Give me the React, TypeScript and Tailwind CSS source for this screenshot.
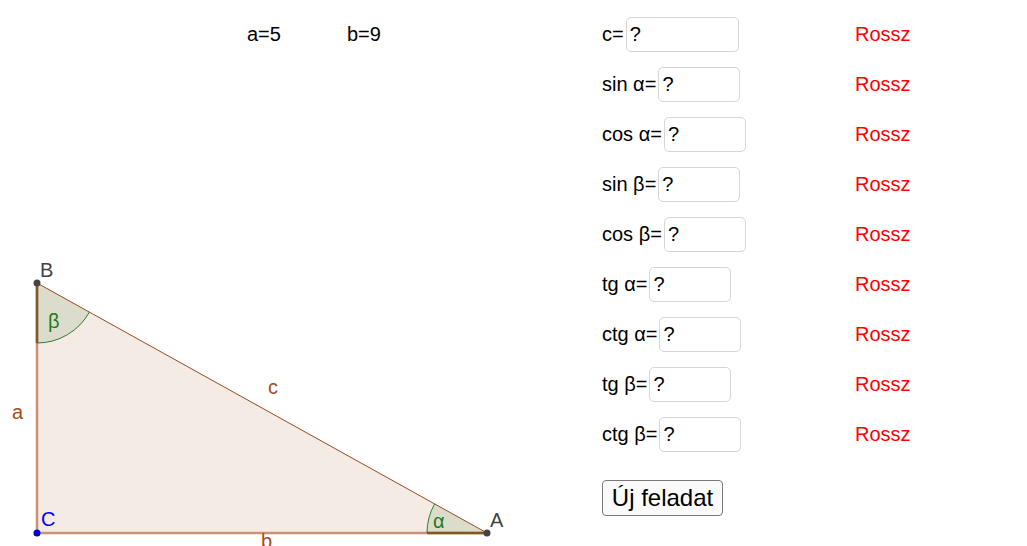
import React from 'react'

const rows = [
  { label: 'c=', w: 'w-[113px]' },
  { label: 'sin α=', w: 'w-[82px]' },
  { label: 'cos α=', w: 'w-[82px]' },
  { label: 'sin β=', w: 'w-[82px]' },
  { label: 'cos β=', w: 'w-[82px]' },
  { label: 'tg α=', w: 'w-[82px]' },
  { label: 'ctg α=', w: 'w-[82px]' },
  { label: 'tg β=', w: 'w-[82px]' },
  { label: 'ctg β=', w: 'w-[82px]' },
]

// right triangle, 50px per unit: C(37,283) B(37,33) A(487,283)
function Triangle() {
  return (
    <svg width="540" height="296" viewBox="0 0 540 296" className="block">
      <polygon points="37,283 37,33 487,283" fill="#f4ebe5" />
      {/* beta sector */}
      <path d="M37,33 L37,93 A60,60 0 0 0 89.4,62.1 Z" fill="#dcdccd" />
      {/* alpha sector */}
      <path d="M487,283 L427,283 A60,60 0 0 1 434.6,253.9 Z" fill="#dcdccd" />
      {/* sides a, b */}
      <line x1="37" y1="33" x2="37" y2="283" stroke="#c99377" strokeWidth="2.5" />
      <line x1="37" y1="283" x2="487" y2="283" stroke="#c99377" strokeWidth="2.5" />
      {/* angle radii overlay */}
      <line x1="37" y1="33" x2="37" y2="93" stroke="#7d5a22" strokeWidth="2.5" />
      <line x1="427" y1="283" x2="487" y2="283" stroke="#7d5a22" strokeWidth="2.5" />
      {/* side c */}
      <line x1="37" y1="33" x2="487" y2="283" stroke="#9c4a1e" strokeWidth="1" />
      <path d="M37,93 A60,60 0 0 0 89.4,62.1" fill="none" stroke="#2e7d32" strokeWidth="1" />
      <path d="M427,283 A60,60 0 0 1 434.6,253.9" fill="none" stroke="#2e7d32" strokeWidth="1" />
      {/* points */}
      <circle cx="37" cy="33" r="3.5" fill="#444" />
      <circle cx="487" cy="283" r="3.5" fill="#444" />
      <circle cx="37" cy="283" r="3.5" fill="#0000cc" />
      {/* labels */}
      <text x="40" y="27" fontSize="20" fill="#444">B</text>
      <text x="490" y="277" fontSize="20" fill="#444">A</text>
      <text x="41" y="276" fontSize="20" fill="#0000ff">C</text>
      <text x="48" y="78" fontSize="20" fill="#1e7b1e">β</text>
      <text x="433" y="278" fontSize="20" fill="#1e7b1e">α</text>
      <text x="12" y="169" fontSize="20" fill="#a34d1f">a</text>
      <text x="268" y="144" fontSize="20" fill="#a34d1f">c</text>
      <text x="261" y="298" fontSize="20" fill="#a34d1f">b</text>
    </svg>
  )
}

export default function App() {
  return (
    <div className="w-[1027px] h-[546px] overflow-hidden bg-white flex font-['Liberation_Sans',Arial,sans-serif] text-[20px] text-black">
      <div className="w-[602px] flex flex-col">
        <div className="h-[250px] pt-[9px]">
          <div className="flex h-[50px] items-center">
            <span className="ml-[247px] w-[100px]">a=5</span>
            <span>b=9</span>
          </div>
        </div>
        <Triangle />
      </div>
      <div className="flex flex-col pt-[9px]">
        {rows.map((r) => (
          <div key={r.label} className="flex h-[50px] items-center">
            <div className="w-[253px] flex items-center">
              <span>{r.label}</span>
              <div className={`${r.w} ml-[2px] h-[35px] border border-[#d6d6d6] rounded-[5px] bg-white flex items-center px-[3px]`}>?</div>
            </div>
            <span className="text-[#ff0000]">Rossz</span>
          </div>
        ))}
        <div className="mt-[21px]">
          <button className="w-[121px] h-[36px] border border-[#7a7a7a] rounded-[4px] bg-[#fafafa] text-[24px] leading-none">Új feladat</button>
        </div>
      </div>
    </div>
  )
}
